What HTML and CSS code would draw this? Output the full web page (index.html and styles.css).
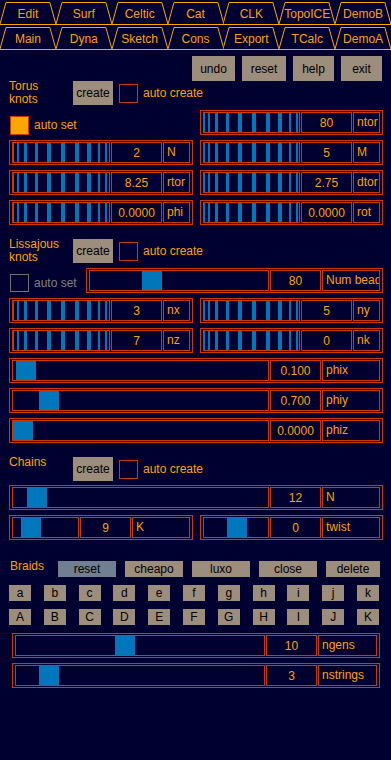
FILE: index.html
```html
<!DOCTYPE html>
<html lang="en">
<head>
  <meta charset="UTF-8" />
  <meta name="viewport" content="width=device-width, initial-scale=1" />
  <title>Construction panel</title>
  <link rel="stylesheet" href="styles.css">
</head>
<body>
  <!-- Tab bar -->
  <div class="tabs">
    <div class="tabrow">
      <div class="tab"><svg viewBox="0 0 56 24" preserveAspectRatio="none"><polyline points="0,24 6,2.5 50,2.5 56,24"/></svg><span>Edit</span></div>
      <div class="tab"><svg viewBox="0 0 56 24" preserveAspectRatio="none"><polyline points="0,24 6,2.5 50,2.5 56,24"/></svg><span>Surf</span></div>
      <div class="tab"><svg viewBox="0 0 56 24" preserveAspectRatio="none"><polyline points="0,24 6,2.5 50,2.5 56,24"/></svg><span>Celtic</span></div>
      <div class="tab"><svg viewBox="0 0 56 24" preserveAspectRatio="none"><polyline points="0,24 6,2.5 50,2.5 56,24"/></svg><span>Cat</span></div>
      <div class="tab"><svg viewBox="0 0 56 24" preserveAspectRatio="none"><polyline points="0,24 6,2.5 50,2.5 56,24"/></svg><span>CLK</span></div>
      <div class="tab"><svg viewBox="0 0 56 24" preserveAspectRatio="none"><polyline points="0,24 6,2.5 50,2.5 56,24"/></svg><span>TopoICE</span></div>
      <div class="tab"><svg viewBox="0 0 56 24" preserveAspectRatio="none"><polyline points="0,24 6,2.5 50,2.5 56,24"/></svg><span>DemoB</span></div>
    </div>
    <div class="tabrow">
      <div class="tab"><svg viewBox="0 0 56 24" preserveAspectRatio="none"><polyline points="0,24 6,2.5 50,2.5 56,24"/></svg><span>Main</span></div>
      <div class="tab"><svg viewBox="0 0 56 24" preserveAspectRatio="none"><polyline points="0,24 6,2.5 50,2.5 56,24"/></svg><span>Dyna</span></div>
      <div class="tab"><svg viewBox="0 0 56 24" preserveAspectRatio="none"><polyline points="0,24 6,2.5 50,2.5 56,24"/></svg><span>Sketch</span></div>
      <div class="tab"><svg viewBox="0 0 56 24" preserveAspectRatio="none"><polyline points="0,24 6,2.5 50,2.5 56,24"/></svg><span>Cons</span></div>
      <div class="tab"><svg viewBox="0 0 56 24" preserveAspectRatio="none"><polyline points="0,24 6,2.5 50,2.5 56,24"/></svg><span>Export</span></div>
      <div class="tab"><svg viewBox="0 0 56 24" preserveAspectRatio="none"><polyline points="0,24 6,2.5 50,2.5 56,24"/></svg><span>TCalc</span></div>
      <div class="tab"><svg viewBox="0 0 56 24" preserveAspectRatio="none"><polyline points="0,24 6,2.5 50,2.5 56,24"/></svg><span>DemoA</span></div>
    </div>
  </div>

  <div class="toolbar">
    <div class="btn b-undo">undo</div>
    <div class="btn b-reset">reset</div>
    <div class="btn b-help">help</div>
    <div class="btn b-exit">exit</div>
  </div>

  <!-- Torus knots -->
  <div class="sechead">
    <div class="title">Torus<br>knots</div>
    <div class="btn create">create</div>
    <div class="check"></div>
    <span class="checktext">auto create</span>
  </div>

  <div class="pair first">
    <div class="autoset">
      <div class="check on"></div>
      <span class="checktext">auto set</span>
    </div>
    <div class="ctl"><div class="track wheel"></div><div class="val">80</div><div class="lbl">ntor</div></div>

    <div class="ctl"><div class="track wheel"></div><div class="val">2</div><div class="lbl">N</div></div>
    <div class="ctl"><div class="track wheel"></div><div class="val">5</div><div class="lbl">M</div></div>

    <div class="ctl"><div class="track wheel"></div><div class="val">8.25</div><div class="lbl">rtor</div></div>
    <div class="ctl"><div class="track wheel"></div><div class="val">2.75</div><div class="lbl">dtor</div></div>

    <div class="ctl"><div class="track wheel"></div><div class="val">0.0000</div><div class="lbl">phi</div></div>
    <div class="ctl"><div class="track wheel"></div><div class="val">0.0000</div><div class="lbl">rot</div></div>
  </div>

  <!-- Lissajous knots -->
  <div class="sechead gap-big">
    <div class="title">Lissajous<br>knots</div>
    <div class="btn create">create</div>
    <div class="check"></div>
    <span class="checktext">auto create</span>
  </div>

  <div class="beads">
    <div class="autoset off">
      <div class="check"></div>
      <span class="checktext">auto set</span>
    </div>
    <div class="ctl wide"><div class="track"><div class="thumb" style="margin-left:52px"></div></div><div class="val">80</div><div class="lbl">Num beads</div></div>
  </div>

  <div class="pair">
    <div class="ctl"><div class="track wheel"></div><div class="val">3</div><div class="lbl">nx</div></div>
    <div class="ctl"><div class="track wheel"></div><div class="val">5</div><div class="lbl">ny</div></div>
    <div class="ctl"><div class="track wheel"></div><div class="val">7</div><div class="lbl">nz</div></div>
    <div class="ctl"><div class="track wheel"></div><div class="val">0</div><div class="lbl">nk</div></div>
  </div>

  <div class="stack">
    <div class="ctl wide"><div class="track"><div class="thumb" style="margin-left:3px"></div></div><div class="val">0.100</div><div class="lbl">phix</div></div>
    <div class="ctl wide"><div class="track"><div class="thumb" style="margin-left:26px"></div></div><div class="val">0.700</div><div class="lbl">phiy</div></div>
    <div class="ctl wide"><div class="track"><div class="thumb" style="margin-left:0px"></div></div><div class="val">0.0000</div><div class="lbl">phiz</div></div>
  </div>

  <!-- Chains -->
  <div class="sechead gap-big">
    <div class="title">Chains</div>
    <div class="btn create">create</div>
    <div class="check"></div>
    <span class="checktext">auto create</span>
  </div>

  <div class="stack tight">
    <div class="ctl wide"><div class="track"><div class="thumb" style="margin-left:14px"></div></div><div class="val">12</div><div class="lbl">N</div></div>
  </div>
  <div class="pair">
    <div class="ctl wide"><div class="track"><div class="thumb" style="margin-left:8px"></div></div><div class="val">9</div><div class="lbl">K</div></div>
    <div class="ctl wide"><div class="track"><div class="thumb" style="margin-left:23px"></div></div><div class="val">0</div><div class="lbl">twist</div></div>
  </div>

  <!-- Braids -->
  <div class="braidhead">
    <div class="title">Braids</div>
    <div class="btn small slate">reset</div>
    <div class="btn small">cheapo</div>
    <div class="btn small">luxo</div>
    <div class="btn small">close</div>
    <div class="btn small last">delete</div>
  </div>

  <div class="letters">
    <div class="btn">a</div><div class="btn">b</div><div class="btn">c</div><div class="btn">d</div>
    <div class="btn">e</div><div class="btn">f</div><div class="btn">g</div><div class="btn">h</div>
    <div class="btn">i</div><div class="btn">j</div><div class="btn">k</div>
    <div class="btn">A</div><div class="btn">B</div><div class="btn">C</div><div class="btn">D</div>
    <div class="btn">E</div><div class="btn">F</div><div class="btn">G</div><div class="btn">H</div>
    <div class="btn">I</div><div class="btn">J</div><div class="btn">K</div>
  </div>

  <div class="stack braids">
    <div class="ctl wide"><div class="track"><div class="thumb" style="margin-left:99px"></div></div><div class="val">10</div><div class="lbl">ngens</div></div>
    <div class="ctl wide"><div class="track"><div class="thumb" style="margin-left:23px"></div></div><div class="val">3</div><div class="lbl">nstrings</div></div>
  </div>
</body>
</html>
```

FILE: styles.css
```css
/* panel dasar */
body {
  margin: 0;
  width: 391px;
  height: 760px;
  overflow: hidden;
  background: #000030;
  font-family: "Liberation Sans", Arial, sans-serif;
  font-size: 12px;
  color: #ffa000;
}

/* Tabs */
.tabrow {
  display: flex;
  height: 24px;
  border-bottom: 1px solid #ffa500;
}

.tab {
  flex: 1;
  position: relative;
  display: flex;
  align-items: center;
  justify-content: center;
  padding-top: 3px;
  white-space: nowrap;
}

.tab svg {
  position: absolute;
  top: 0; left: 0;
  width: 100%;
  height: 100%;
}

.tab polyline {
  fill: none;
  stroke: #ffa500;
  stroke-width: 1;
  vector-effect: non-scaling-stroke;
}

.tab span {
  position: relative;
}

/* tombol abu */
.btn {
  background: #9d8d7d;
  color: #000;
  display: flex;
  align-items: center;
  justify-content: center;
  box-sizing: border-box;
}

.toolbar {
  display: flex;
  justify-content: flex-end;
  gap: 7px;
  padding-right: 9px;
  margin-top: 6px;
}

.toolbar .btn { height: 25px; }
.b-undo { width: 43px; }
.b-reset { width: 44px; }
.b-help { width: 41px; }
.b-exit { width: 41px; }

/* Section header */
.sechead {
  display: flex;
  align-items: center;
  padding-left: 9px;
  height: 24px;
}

.sechead.gap-big { margin-top: 14px; }

.title {
  width: 64px;
  align-self: flex-start;
  line-height: 13px;
  margin-top: -1px;
}

.create {
  width: 40px;
  height: 24px;
}

.check {
  width: 19px;
  height: 19px;
  box-sizing: border-box;
  border: 1px solid #cd3700;
  margin-left: 6px;
}

.check.on {
  background: #ffa500;
}

.checktext {
  margin-left: 5px;
}

/* Grid dua kolom */
.pair {
  display: grid;
  grid-template-columns: 184px 183px;
  column-gap: 7px;
  row-gap: 5px;
  padding-left: 9px;
  margin-top: 5px;
}

.autoset {
  display: flex;
  align-items: flex-end;
}

.autoset .check {
  margin-left: 1px;
}

.autoset .checktext {
  line-height: 19px;
}

.autoset.off .check {
  border-color: #707070;
  height: 18px;
}

.autoset.off .checktext {
  color: #808080;
  line-height: 18px;
}

.beads {
  display: flex;
  padding: 0 8px 0 9px;
  margin-top: 5px;
}

.beads .autoset {
  width: 77px;
  align-items: flex-end;
  padding-bottom: 1px;
}

.beads .ctl { flex: 1; }

.stack {
  display: flex;
  flex-direction: column;
  gap: 5px;
  padding: 0 8px 0 9px;
  margin-top: 5px;
}

.stack.tight { margin-top: 4px; }

/* Kontrol slider */
.ctl {
  display: flex;
  gap: 1px;
  height: 25px;
  box-sizing: border-box;
  border: 1px solid #cd3700;
  padding: 1px 2px;
}

.ctl > div {
  border: 1px solid #cd3700;
  box-sizing: border-box;
}

.track {
  flex: 1;
  min-width: 0;
  display: flex;
  overflow: hidden;
}

.thumb {
  width: 20px;
  flex: none;
  background: #0077bb;
}

.wheel {
  background: linear-gradient(to right,
    #0077bb 0 1px, transparent 1px 4px,
    #0077bb 4px 6px, transparent 6px 11px,
    #0077bb 11px 14px, transparent 14px 22px,
    #0077bb 22px 25px, transparent 25px 34px,
    #0077bb 34px 38px, transparent 38px 48px,
    #0077bb 48px 52px, transparent 52px 62px,
    #0077bb 62px 66px, transparent 66px 74px,
    #0077bb 74px 78px, transparent 78px 85px,
    #0077bb 85px 87px, transparent 87px 92px,
    #0077bb 92px 94px, transparent 94px);
}

.val {
  width: 51px;
  flex: none;
  display: flex;
  align-items: center;
  justify-content: center;
}

.lbl {
  width: 27px;
  flex: none;
  padding-left: 3px;
  line-height: 19px;
  white-space: nowrap;
  overflow: hidden;
}

.ctl.wide .lbl {
  width: 58px;
}

/* Braids */
.braidhead {
  display: flex;
  align-items: flex-start;
  gap: 9px;
  padding-left: 10px;
  margin-top: 21px;
}

.braidhead .title {
  width: 39px;
  margin-top: -1px;
}

.btn.small {
  width: 58px;
  height: 16px;
}

.btn.small.last { width: 54px; }

.btn.slate { background: #708090; }

.letters {
  display: grid;
  grid-template-columns: repeat(11, 22px);
  column-gap: 12.8px;
  row-gap: 8px;
  padding-left: 9px;
  margin-top: 8px;
}

.letters .btn {
  height: 16px;
}

.stack.braids {
  padding: 0 11px 0 12px;
  margin-top: 8px;
}

.stack.braids .lbl {
  width: 59px;
}
```
